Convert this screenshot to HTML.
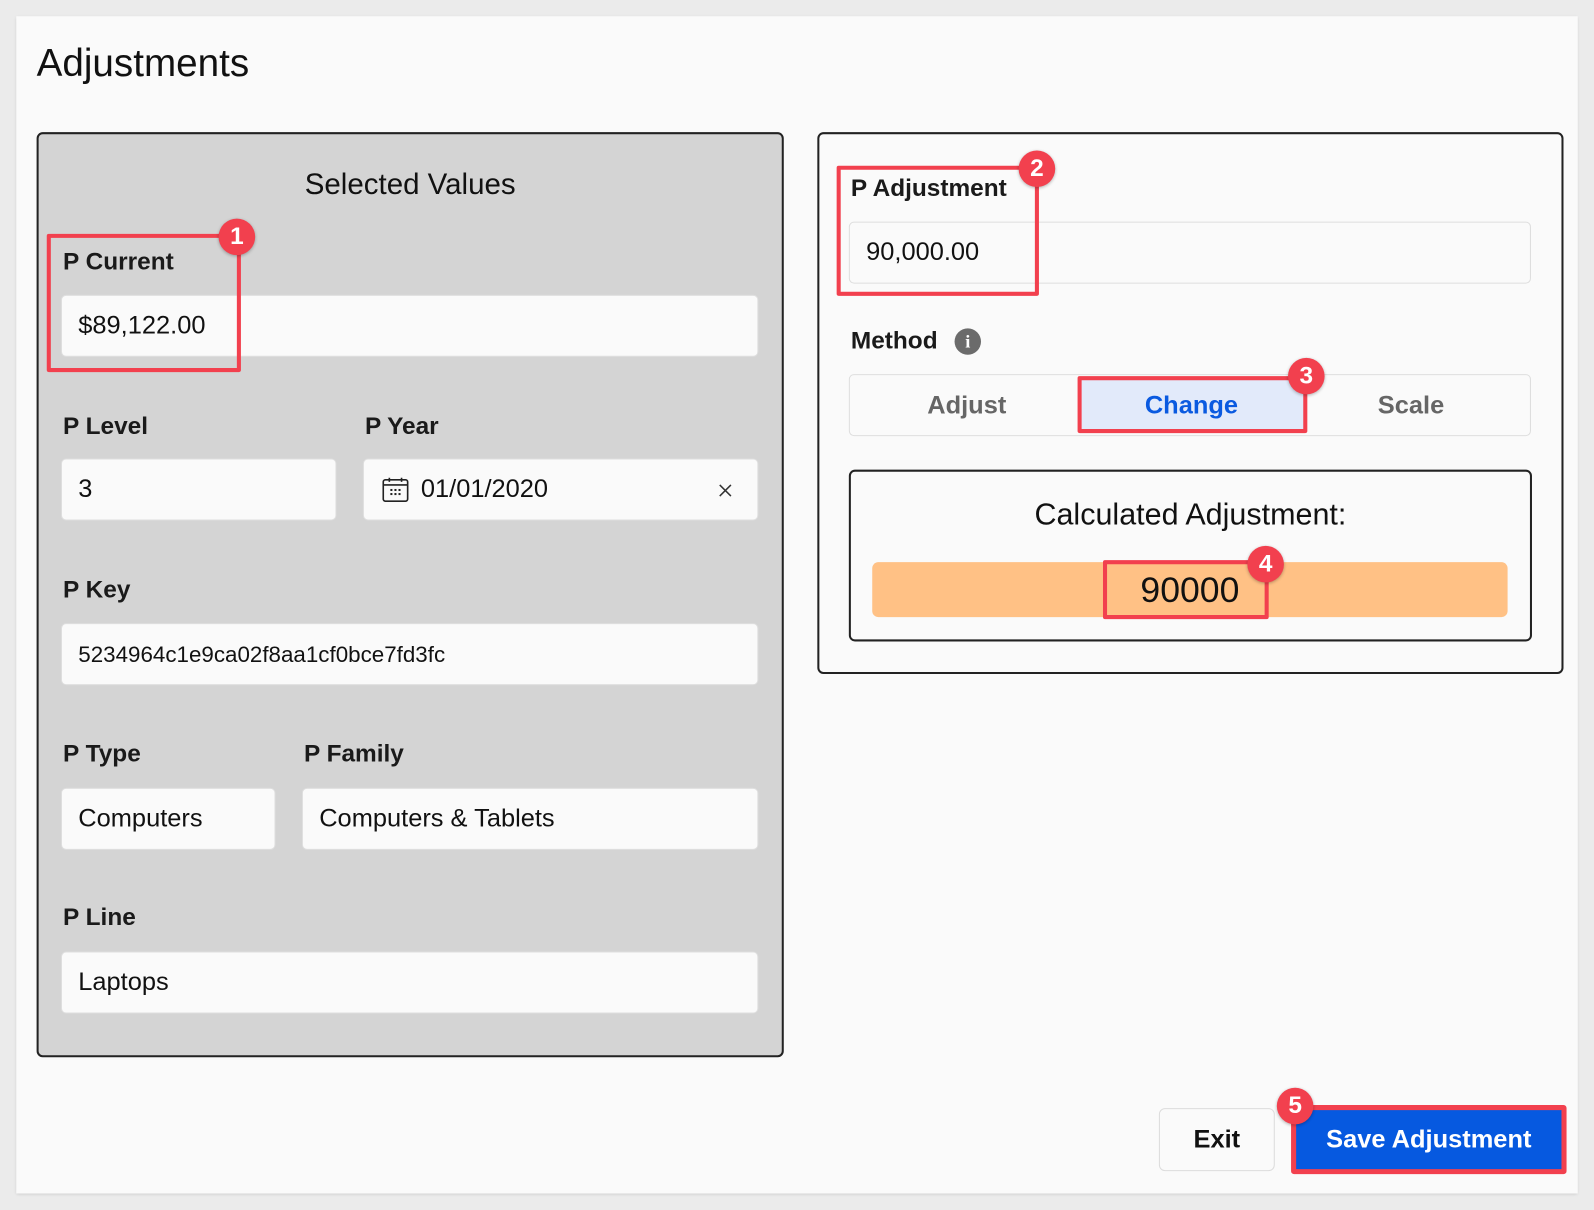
<!DOCTYPE html>
<html><head><meta charset="utf-8"><style>
*{box-sizing:border-box;margin:0;padding:0}
body{width:1594px;height:1210px;background:#ebebeb;font-family:"Liberation Sans",sans-serif;color:#111;position:relative;overflow:hidden}
#w{position:absolute;left:0;top:0;width:1568px;height:1190px;transform:scale(1.01658);transform-origin:0 0}
.a{position:absolute}
.card{left:16px;top:16px;width:1536px;height:1158px;background:#fafafa;box-shadow:0 1px 3px rgba(0,0,0,.15)}
.lbl{position:absolute;font-weight:bold;font-size:24px;line-height:30px;color:#1a1a1a}
.inp{position:absolute;background:#fafafa;border:1px solid #dedede;border-radius:5px;font-size:25px;line-height:59px;padding-left:16px;color:#111}
.red{position:absolute;border:4px solid #f2404e;border-radius:2px}
.badge{position:absolute;width:36px;height:36px;margin:-18px 0 0 -18px;border-radius:50%;background:#f2404e;color:#fff;font-weight:bold;font-size:24px;line-height:36px;text-align:center;box-shadow:0 1px 3px rgba(0,0,0,.3)}
</style></head><body><div id="w">
<div class="a card"></div>
<div class="a" style="left:36px;top:41px;font-size:38px;line-height:44px;color:#111">Adjustments</div>

<div class="a" style="left:36px;top:130px;width:735px;height:910px;background:#d4d4d4;border:2px solid #222;border-radius:6px"></div>
<div class="a" style="left:36px;top:165px;width:735px;text-align:center;font-size:29px;line-height:34px">Selected Values</div>

<div class="lbl" style="left:62px;top:243px">P Current</div>
<div class="inp" style="left:60px;top:290px;width:686px;height:61px">$89,122.00</div>

<div class="lbl" style="left:62px;top:405px">P Level</div>
<div class="inp" style="left:60px;top:451px;width:271px;height:61px">3</div>
<div class="lbl" style="left:359px;top:405px">P Year</div>
<div class="inp" style="left:357px;top:451px;width:389px;height:61px;padding-left:56px">01/01/2020</div>
<svg class="a" style="left:376px;top:469px" width="26" height="26" viewBox="0 0 26 26"><rect x="1" y="3" width="24" height="21" rx="2" fill="none" stroke="#222" stroke-width="1.6"/><line x1="1" y1="8" x2="25" y2="8" stroke="#222" stroke-width="1.6"/><line x1="7" y1="1" x2="7" y2="5" stroke="#222" stroke-width="1.6"/><line x1="19" y1="1" x2="19" y2="5" stroke="#222" stroke-width="1.6"/><g fill="#222"><rect x="8" y="12" width="2" height="2"/><rect x="12" y="12" width="2" height="2"/><rect x="16" y="12" width="2" height="2"/><rect x="8" y="16" width="2" height="2"/><rect x="12" y="16" width="2" height="2"/><rect x="16" y="16" width="2" height="2"/></g></svg>
<svg class="a" style="left:707px;top:476px" width="13" height="13" viewBox="0 0 13 13"><path d="M1 1L12 12M12 1L1 12" stroke="#333" stroke-width="1.5"/></svg>

<div class="lbl" style="left:62px;top:566px">P Key</div>
<div class="inp" style="left:60px;top:613px;width:686px;height:61px;font-size:22px">5234964c1e9ca02f8aa1cf0bce7fd3fc</div>

<div class="lbl" style="left:62px;top:727px">P Type</div>
<div class="inp" style="left:60px;top:775px;width:211px;height:61px">Computers</div>
<div class="lbl" style="left:299px;top:727px">P Family</div>
<div class="inp" style="left:297px;top:775px;width:449px;height:61px">Computers &amp; Tablets</div>

<div class="lbl" style="left:62px;top:888px">P Line</div>
<div class="inp" style="left:60px;top:936px;width:686px;height:61px">Laptops</div>

<div class="red" style="left:46px;top:230px;width:191px;height:136px"></div>
<div class="badge" style="left:233px;top:233px">1</div>

<div class="a" style="left:804px;top:130px;width:734px;height:533px;background:#fafafa;border:2px solid #222;border-radius:6px"></div>
<div class="lbl" style="left:837px;top:171px">P Adjustment</div>
<div class="inp" style="left:835px;top:218px;width:671px;height:61px">90,000.00</div>
<div class="red" style="left:823px;top:163px;width:199px;height:128px"></div>
<div class="badge" style="left:1020px;top:166px">2</div>

<div class="lbl" style="left:837px;top:321px">Method</div>
<div class="a" style="left:939px;top:323px;width:26px;height:26px;border-radius:50%;background:#6b6b6b;color:#fff;font-weight:bold;font-size:18px;line-height:26px;text-align:center;font-family:'Liberation Serif',serif">i</div>

<div class="a" style="left:835px;top:368px;width:671px;height:61px;border:1px solid #dedede;border-radius:5px;background:#fafafa"></div>
<div class="a" style="left:1064px;top:372px;width:219px;height:52px;background:#e2eafa"></div>
<div class="a" style="left:837px;top:384px;width:228px;text-align:center;font-size:25px;font-weight:bold;color:#666;line-height:30px">Adjust</div>
<div class="a" style="left:1062px;top:384px;width:220px;text-align:center;font-size:25px;font-weight:bold;color:#0a5ae0;line-height:30px">Change</div>
<div class="a" style="left:1280px;top:384px;width:216px;text-align:center;font-size:25px;font-weight:bold;color:#666;line-height:30px">Scale</div>
<div class="red" style="left:1060px;top:370px;width:226px;height:56px"></div>
<div class="badge" style="left:1285px;top:370px">3</div>

<div class="a" style="left:835px;top:462px;width:672px;height:169px;border:2px solid #222;border-radius:6px"></div>
<div class="a" style="left:835px;top:490px;width:672px;text-align:center;font-size:30px;line-height:34px">Calculated Adjustment:</div>
<div class="a" style="left:858px;top:553px;width:625px;height:54px;background:#ffc185;border-radius:6px"></div>
<div class="a" style="left:858px;top:560px;width:625px;text-align:center;font-size:35px;line-height:42px">90000</div>
<div class="red" style="left:1085px;top:551px;width:163px;height:58px"></div>
<div class="badge" style="left:1245px;top:555px">4</div>

<div class="a" style="left:1140px;top:1090px;width:114px;height:62px;border:1px solid #dcdcdc;border-radius:6px;background:#fafafa;text-align:center;font-weight:bold;font-size:25px;line-height:60px">Exit</div>
<div class="a" style="left:1270px;top:1087px;width:271px;height:68px;background:#0659e0;border:5px solid #f2404e;border-radius:3px;text-align:center;color:#fff;font-weight:bold;font-size:25px;line-height:58px">Save Adjustment</div>
<div class="badge" style="left:1274px;top:1088px">5</div>
</div></body></html>
